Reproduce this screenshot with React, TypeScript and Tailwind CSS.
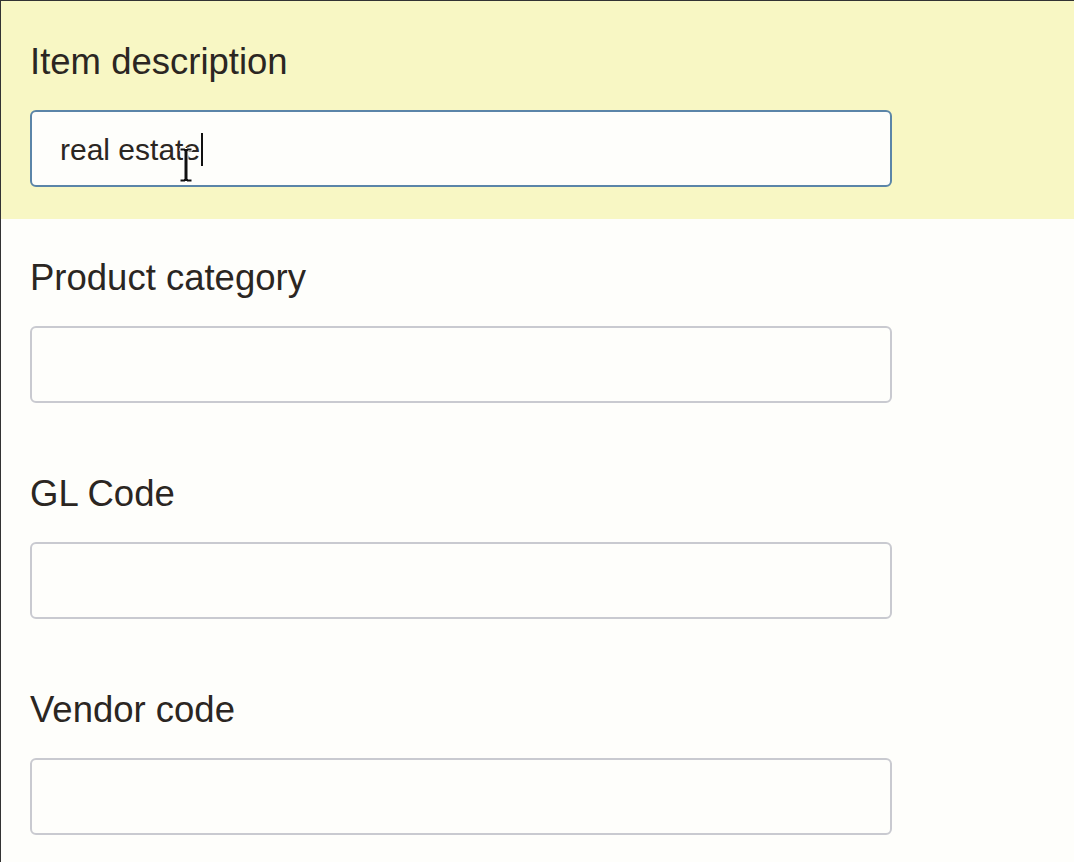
const fields = ["Product category", "GL Code", "Vendor code"];

function IBeam() {
  // mouse text cursor sitting over the focused input
  return (
    <svg
      className="absolute left-[177px] top-[145px]"
      width="16"
      height="38"
      viewBox="0 0 16 38"
    >
      <path
        d="M2 2h5l1 1 1-1h5v3h-4v28h4v3H9l-1-1-1 1H2v-3h4V5H2z"
        fill="#111"
        stroke="#fff"
        strokeWidth="1"
      />
    </svg>
  );
}

export default function App() {
  return (
    <div className="min-h-[862px] w-[1074px] border-l border-t border-[#333] bg-[#fefefb] font-['Liberation_Sans',Arial,sans-serif] text-[#2b2622]">
      {/* Highlighted, focused field */}
      <div className="relative bg-[#f8f7c4] pl-[29px] pt-[41px] pb-[32px]">
        <div className="h-[40px] text-[36.5px] leading-[40px]">Item description</div>
        <div className="mt-[28px] flex h-[77px] w-[862px] items-center rounded-[6px] border-2 border-[#5b85a8] bg-[#fefefb] pl-[28px] pt-[1px] text-[30px]">
          <span>real estate</span>
          <span className="ml-[1px] h-[33px] w-[2px] bg-[#111]" />
        </div>
        <IBeam />
      </div>

      {fields.map((label) => (
        <div key={label} className="pl-[29px] pt-[39px] pb-[32px]">
          <div className="h-[40px] text-[36.5px] leading-[40px]">{label}</div>
          <div className="mt-[28px] h-[77px] w-[862px] rounded-[6px] border-2 border-[#c9cad0] bg-[#fefefb]" />
        </div>
      ))}
    </div>
  );
}
